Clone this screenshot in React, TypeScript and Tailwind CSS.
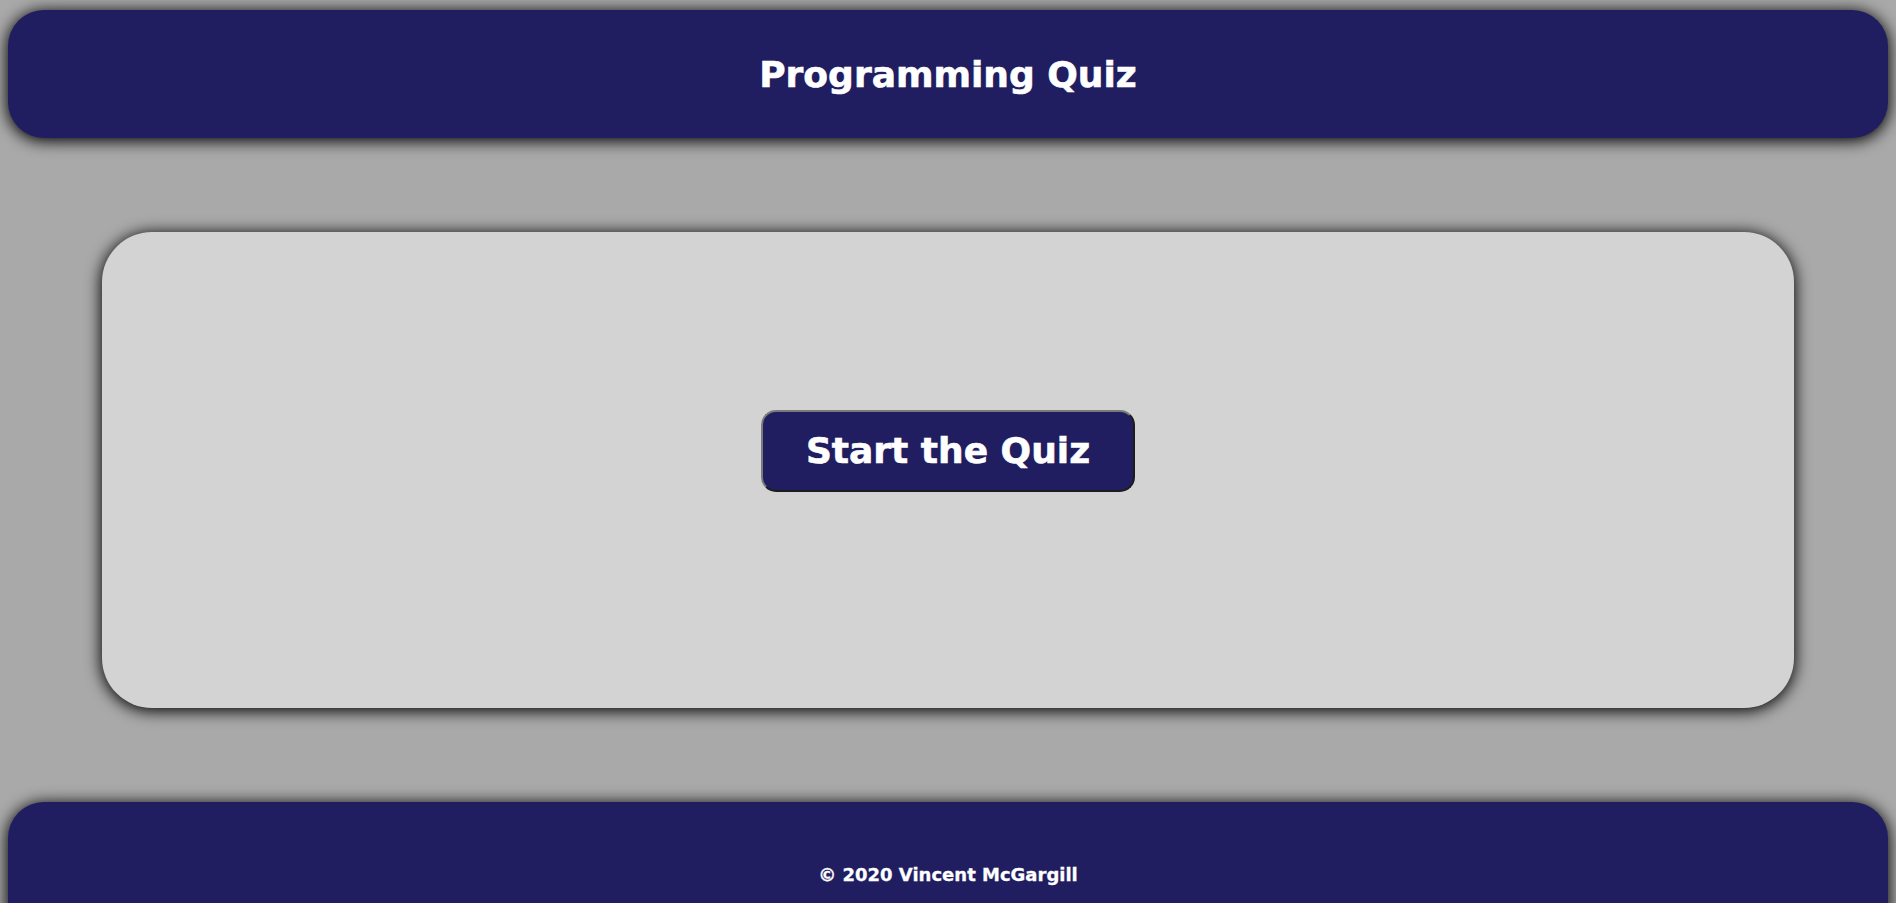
export default function App() {
  return (
    <div className="h-screen overflow-hidden bg-[#a9a9a9] px-[8px] pt-[10px] font-['DejaVu_Sans',sans-serif] text-white">
      {/* Header */}
      <header className="flex h-[128px] items-center justify-center rounded-[36px] bg-[#201e60] shadow-[0_2px_16px_1px_#000]">
        <h1 className="mt-[2px] text-[36px] font-bold leading-none [-webkit-text-stroke:0.6px_white]">Programming Quiz</h1>
      </header>

      {/* Quiz card */}
      <main className="mx-[94px] mt-[94px] flex h-[476px] flex-col items-center rounded-[50px] bg-[#d3d3d3] pt-[178px] shadow-[0_2px_16px_1px_#000]">
        <button className="flex h-[82px] w-[374px] items-center justify-center rounded-[15px] border-2 border-t-[#7a7a7a] border-l-[#7a7a7a] border-r-[#1c1c1c] border-b-[#1c1c1c] bg-[#201e60] text-[36px] font-bold leading-none text-white [-webkit-text-stroke:0.6px_white]">
          Start the Quiz
        </button>
      </main>

      {/* Footer */}
      <footer className="mt-[94px] h-[200px] rounded-[36px] bg-[#201e60] pt-[62px] text-center shadow-[0_2px_16px_1px_#000]">
        <p className="text-[18px] font-bold leading-[22px] [-webkit-text-stroke:0.3px_white]">© 2020 Vincent McGargill</p>
      </footer>
    </div>
  )
}
